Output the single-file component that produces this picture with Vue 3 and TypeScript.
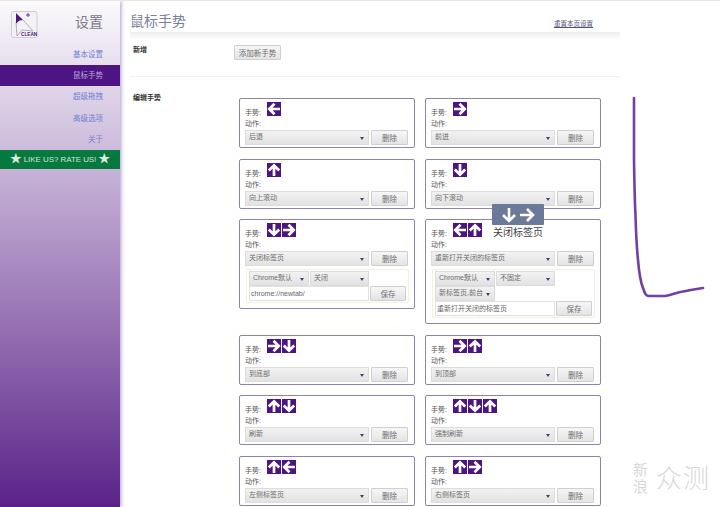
<script setup lang="ts">
type Dir = 'l' | 'r' | 'u' | 'd'
interface Card {
  g: Dir[]
  a: string
  extra?: { sels: string[][]; input: string }
}
const paths: Record<Dir, string> = {
  l: 'M13 7H3M7.5 1.8L2.3 7L7.5 12.2',
  r: 'M1 7H11M6.500 1.8L11.700 7L6.500 12.2',
  u: 'M7 13V3M1.8 7.500L7 2.300L12.2 7.500',
  d: 'M7 1V11M1.8 6.500L7 11.700L12.2 6.500',
}
const nav = ['基本设置', '鼠标手势', '超级拖拽', '高级选项', '关于']
const cards: Card[] = [
  { g: ['l'], a: '后退' },
  { g: ['r'], a: '前进' },
  { g: ['u'], a: '向上滚动' },
  { g: ['d'], a: '向下滚动' },
  { g: ['d', 'r'], a: '关闭标签页', extra: { sels: [['Chrome默认', 'w1'], ['关闭', 'w2']], input: 'chrome://newtab/' } },
  {
    g: ['l', 'u'],
    a: '重新打开关闭的标签页',
    extra: { sels: [['Chrome默认', 'w1'], ['不固定', 'w2'], ['新标签页,前台', 'w3']], input: '重新打开关闭的标签页' },
  },
  { g: ['r', 'd'], a: '到底部' },
  { g: ['r', 'u'], a: '到顶部' },
  { g: ['u', 'd'], a: '刷新' },
  { g: ['u', 'd', 'u'], a: '强制刷新' },
  { g: ['u', 'l'], a: '左侧标签页' },
  { g: ['u', 'r'], a: '右侧标签页' },
]
</script>

<template>
  <div class="page">
    <aside class="side">
      <div class="brand">
        <svg class="logo" width="27" height="27" viewBox="0 0 27 27">
          <rect x="0.5" y="0.5" width="25.500" height="26" rx="2" fill="#f4f1f6" stroke="#cfccd2" />
          <path d="M12 9L22 20L11 19L6 25L5 11" fill="none" stroke="#a9a6ac" stroke-width="0.9" />
          <path d="M5 2L12 9L8.500 9.500L5 12.500Z" fill="#4d1484" />
          <path d="M15 4H19M17 2V6" stroke="#6a3a9c" stroke-width="1" />
          <text x="10" y="24.500" class="logo-t">CLEAN</text>
        </svg>
        <span class="brand-t">设置</span>
      </div>
      <nav class="nav">
        <a v-for="(n, i) in nav" :key="n" class="nav-i" :class="{ on: i === 1 }">{{ n }}</a>
      </nav>
      <div class="rate"><span class="star">★</span><span class="rate-t">LIKE US? RATE US!</span><span class="star">★</span></div>
    </aside>

    <main class="main">
      <header class="head">
        <h1>鼠标手势</h1>
        <a class="reset">重置本页设置</a>
      </header>
      <section class="sec add">
        <h2>新增</h2>
        <button class="btn addbtn">添加新手势</button>
      </section>
      <section class="sec edit">
        <h2>编辑手势</h2>
        <div class="grid">
          <div v-for="(c, i) in cards" :key="i" class="card">
            <div class="row gest">
              <span class="lbl">手势:</span>
              <span class="icons">
                <svg v-for="(d, j) in c.g" :key="j" class="ic" width="14" height="14" viewBox="0 0 14 14">
                  <rect width="14" height="14" fill="#4d1484" />
                  <path :d="paths[d]" fill="none" stroke="#fff" stroke-width="2.700" />
                </svg>
              </span>
            </div>
            <div class="lbl act">动作:</div>
            <div class="ctl">
              <div class="sel main-sel">{{ c.a }}<i class="car"></i></div>
              <button class="btn del">删除</button>
            </div>
            <div v-if="c.extra" class="extra">
              <div class="sels">
                <div v-for="s in c.extra.sels" :key="s[0]" class="sel" :class="s[1]">{{ s[0] }}<i class="car"></i></div>
              </div>
              <div class="inrow">
                <div class="inp">{{ c.extra.input }}</div>
                <button class="btn save">保存</button>
              </div>
            </div>
          </div>
        </div>
      </section>
    </main>

    <div class="hint">
      <div class="hint-box">
        <svg width="36" height="16" viewBox="0 0 36 16">
          <path d="M9 1V14M3 8L9 14L15 8M20 8H33M27 2L33 8L27 14" fill="none" stroke="#fff" stroke-width="2.600" />
        </svg>
      </div>
      <div class="hint-t">关闭标签页</div>
    </div>

    <svg class="stroke" width="720" height="507" viewBox="0 0 720 507">
      <path
        d="M634 98L634 160C634.500 190 635 207 635.500 215C636 235 637 250 638 260C639 272 641 283 643 288C645 294 646 296 649 296L665 296C671 295 677 292.500 683 291.500C690 290 697 289 703 288"
        fill="none" stroke="#7040a5" stroke-width="2.600" stroke-linecap="round"
      />
    </svg>

    <div class="mark"><span class="mk-s">新<br />浪</span><span class="mk-b">众测</span></div>
  </div>
</template>

<style>
html, body { margin: 0; background: #fff; overflow: hidden; }
</style>

<style scoped>
.page {
  position: relative;
  width: 720px;
  height: 507px;
  overflow: hidden;
  display: flex;
  font-family: "Liberation Sans", "Noto Sans CJK SC", sans-serif;
  background: #fff;
  border-top: 1px solid #e6e6e6;
  box-sizing: border-box;
}
.side {
  width: 120px;
  flex: none;
  background: linear-gradient(180deg, #fbfafc 0, #c6b2d7 170px, #8a62aa 360px, #5a2289 507px);
  box-shadow: 1px 0 4px rgba(110, 70, 160, .55);
  position: relative;
  z-index: 1;
}
.brand { display: flex; justify-content: space-between; align-items: flex-start; padding: 10px 17px 0 11px; height: 27px; }
.logo-t { font-size: 4.700px; fill: #4d1484; font-family: "Liberation Sans", sans-serif; font-weight: bold; }
.brand-t { font-size: 14px; line-height: 18px; margin-top: 2px; color: #7d7b86; }
.nav { margin-top: 6px; display: flex; flex-direction: column; }
.nav-i { height: 21.200px; line-height: 21px; text-align: right; padding-right: 17px; font-size: 7.500px; color: #7080d0; }
.nav-i.on { background: #4d1484; color: #b9a6d6; }
.rate {
  height: 19px;
  background: #067a3e;
  color: #d5e4da;
  font-size: 7.900px;
  display: flex;
  align-items: center;
  justify-content: center;
  gap: 2px;
  white-space: nowrap;
}
.star { font-size: 12px; line-height: 19px; color: #dfe8e2; }
.main { flex: 1; padding-left: 10px; min-width: 0; }
.head {
  width: 490px;
  height: 31px;
  display: flex;
  justify-content: space-between;
  align-items: flex-start;
}
h1 { margin: 11px 0 0 0; font-size: 14px; line-height: 18px; font-weight: normal; color: #7a809a; }
.reset { margin: 19px 27px 0 0; font-size: 6.500px; line-height: 8px; color: #50507a; text-decoration: underline; }
.sec { position: relative; width: 490px; }
h2 { margin: 0; font-size: 7px; line-height: 10px; color: #333; position: absolute; left: 3px; }
.add { height: 44px; border-bottom: 1px solid #f0f0f0; background: linear-gradient(#ededed, #fff 8px); }
.add h2 { top: 13px; }
.addbtn { position: absolute; left: 104px; top: 13px; width: 47px; height: 15px; font-size: 7.200px; }
.edit { padding: 21px 0 0 109px; box-sizing: border-box; width: 490px; }
.edit h2 { top: 16px; }
.grid { display: grid; grid-template-columns: 176px 176px; column-gap: 10px; row-gap: 10.500px; align-items: start; width: 362px; }
.card {
  box-sizing: border-box;
  min-height: 50px;
  border: 1px solid #8d84ad;
  border-radius: 2px;
  padding: 3px 5px 2px 5px;
  background: #fff;
  color: #555;
}
.row.gest { display: flex; align-items: flex-start; height: 17px; }
.lbl { line-height: 10px; font-size: 7px; color: #555; }
.gest .lbl { margin-top: 6px; width: 22px; box-sizing: border-box; }
.icons { display: flex; gap: 1px; }
.ic { display: block; }
.act { height: 11px; }
.ctl { display: flex; gap: 2px; height: 15px; }
.sel {
  position: relative;
  box-sizing: border-box;
  height: 15px;
  line-height: 12px;
  padding-left: 3px;
  background: linear-gradient(#f2f2f2, #e2e2e2);
  border: 1px solid #dcdcdc;
  color: #6e6e6e;
  font-size: 7px;
  white-space: nowrap;
}
.main-sel { width: 124px; }
.car {
  position: absolute;
  right: 4px;
  top: 6px;
  border: 2.500px solid transparent;
  border-top: 3px solid #4d3a70;
  border-bottom: 0;
}
.btn {
  box-sizing: border-box;
  margin: 0;
  padding: 0;
  font-family: inherit;
  background: linear-gradient(#f6f6f6, #e4e4e4);
  border: 1px solid #cfcfcf;
  border-radius: 1px;
  color: #6e6e6e;
  font-size: 7.500px;
}
.del { width: 37px; height: 15px; }
.extra {
  box-sizing: border-box;
  margin: 3px 0 3px 1px;
  border: 1px solid #f2f2dc;
  border-radius: 2px;
  width: 163px;
  padding: 1px 2px;
}
.sels { display: flex; flex-wrap: wrap; column-gap: 1px; }
.sel.w1 { width: 60px; }
.sel.w2 { width: 59px; }
.sel.w3 { width: 60px; }
.inrow { display: flex; gap: 1px; align-items: center; }
.inp {
  box-sizing: border-box;
  width: 120px;
  height: 15px;
  line-height: 13px;
  padding-left: 1px;
  border: 1px solid #e2e2e2;
  color: #666;
  background: #fff;
  font-size: 7px;
  white-space: nowrap;
}
.save { width: 36px; height: 15px; }
.hint { position: absolute; left: 492px; top: 203px; width: 52px; text-align: center; z-index: 3; }
.hint-box { height: 21px; background: #6b7a98; display: flex; align-items: center; justify-content: center; border-radius: 1px; }
.hint-t { font-family: "Liberation Serif", "Noto Sans CJK SC", serif; font-size: 10px; line-height: 14px; margin-top: 1px; color: #444; white-space: nowrap; }
.stroke { position: absolute; left: 0; top: -1px; pointer-events: none; z-index: 4; }
.mark {
  position: absolute;
  left: 633px;
  top: 459px;
  display: flex;
  align-items: center;
  gap: 6px;
  color: rgba(175, 175, 175, .5);
  z-index: 5;
  font-family: "Noto Sans CJK SC", sans-serif;
}
.mk-s { font-size: 15px; line-height: 17px; width: 17px; }
.mk-b { font-size: 26px; line-height: 34px; letter-spacing: 1px; white-space: nowrap; font-weight: 300; }
</style>
